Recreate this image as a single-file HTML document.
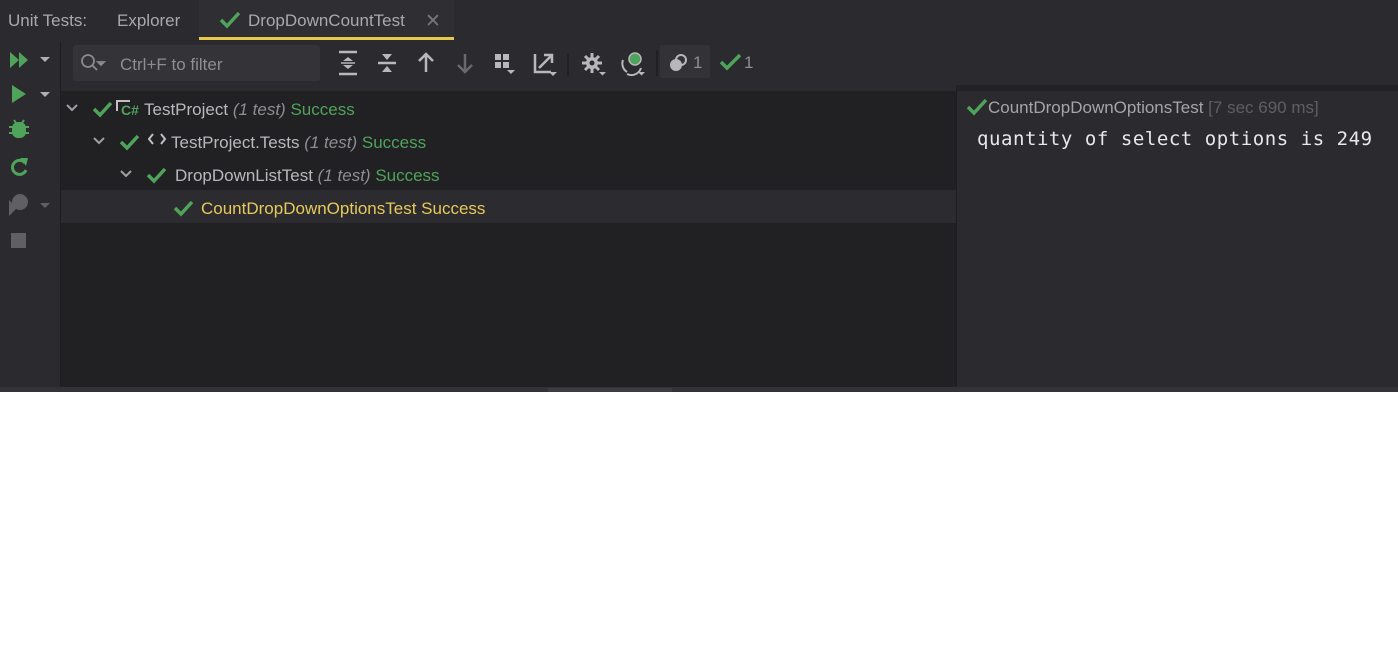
<!DOCTYPE html>
<html><head><style>
body{margin:0;width:1398px;height:648px;background:#fff;position:relative;overflow:hidden;font-family:"Liberation Sans",sans-serif}
.a{position:absolute}
.t{color:#b9b9bd;font-size:17px;white-space:nowrap}
.g{color:#4fa35a}
.i{font-style:italic;color:#8e8e93}
</style></head><body>
<div class="a" style="left:0;top:0;width:1398px;height:392px;background:#2b2a2e"></div>
<!-- tabs -->
<div class="a t" style="left:8px;top:11px;color:#a9a9ad">Unit Tests:</div>
<div class="a t" style="left:117px;top:11px;color:#a9a9ad">Explorer</div>
<div class="a" style="left:199px;top:0;width:255px;height:38px;background:#2f2e32"></div>
<div class="a" style="left:199px;top:37px;width:255px;height:3px;background:#e8c84a"></div>
<svg class="a" style="left:219px;top:11px" width="22" height="18"><path d="M2 9l6 6L20 2" stroke="#4fa35a" stroke-width="3.5" fill="none"/></svg>
<div class="a t" style="left:248px;top:11px;color:#a9a9ad">DropDownCountTest</div>
<div class="a t" style="left:425px;top:10px;color:#77777b;font-size:19px">✕</div>
<!-- left toolbar -->
<div class="a" style="left:60px;top:42px;width:1px;height:345px;background:#1e1d20"></div>
<svg class="a" style="left:8px;top:50px" width="48" height="210">
<path d="M2 2l9 8-9 8zM11 2l9 8-9 8z" fill="#4fa35a"/>
<path d="M32 7h10l-5 5z" fill="#b0b0b4"/>
<path d="M4 35l14 9-14 9z" fill="#4fa35a"/>
<path d="M32 42h10l-5 5z" fill="#b0b0b4"/>
<rect x="4" y="72" width="14" height="16" rx="6" fill="#4fa35a"/><path d="M1 77h20M1 83h20M6 70l2 3M16 70l-2 3" stroke="#4fa35a" stroke-width="2"/>
<path d="M17 113a7 7 0 1 0 1 7" stroke="#4fa35a" stroke-width="3" fill="none"/><path d="M12 108l8 0-2 8z" fill="#4fa35a"/>
<circle cx="12" cy="152" r="8" fill="#606064"/><path d="M1 150l8 8-8 8z" fill="#606064"/>
<path d="M32 153h10l-5 5z" fill="#606064"/>
<rect x="3" y="183" width="15" height="15" fill="#606064"/>
</svg>
<!-- filter -->
<div class="a" style="left:73px;top:45px;width:247px;height:36px;background:#343337;border-radius:3px"></div>
<svg class="a" style="left:80px;top:53px" width="28" height="20"><circle cx="8" cy="8" r="6" stroke="#8a8a8e" stroke-width="1.8" fill="none"/><path d="M12 12l5 5M18 9h6l-3 3z" stroke="#8a8a8e" stroke-width="1.8" fill="#8a8a8e"/></svg>
<div class="a t" style="left:120px;top:55px;color:#8e8e92">Ctrl+F to filter</div>
<svg class="a" style="left:335px;top:48px" width="430" height="32" fill="#b8b8bc" stroke="#b8b8bc">
<path d="M4 4h18M4 26h18" stroke-width="2.5"/><path d="M8 13l5-4 5 4zM8 17l5 4 5-4z" stroke="none"/><path d="M6 15h14" stroke-width="1.5"/>
<path d="M43 15h18" stroke-width="2.5"/><path d="M47 6l5 6 5-6zM47 24l5-6 5 6z" stroke="none"/>
<path d="M91 24V6M84 13l7-7 7 7" stroke-width="2.5" fill="none"/>
<path d="M130 6v18M123 17l7 7 7-7" stroke-width="2.5" fill="none" stroke="#6a6a6e"/>
<rect x="160" y="6" width="6" height="6" stroke="none"/><rect x="168" y="6" width="6" height="6" stroke="none"/><rect x="160" y="14" width="6" height="6" stroke="none"/><rect x="168" y="14" width="6" height="6" stroke="none"/><path d="M172 22h8l-4 4z" stroke="none"/>
<path d="M200 6v18h16M204 20l12-12M209 7h8v8" stroke-width="2.5" fill="none"/><path d="M214 24h8l-4 4z" stroke="none"/>
<path d="M233 6v22" stroke="#1e1d20" stroke-width="1.5"/>
<path d="M257 5v20M247 15h20M250 8l14 14M264 8l-14 14" stroke-width="3"/><circle cx="257" cy="15" r="6" stroke="none"/><circle cx="257" cy="15" r="2.5" fill="#2b2a2e" stroke="none"/><path d="M264 24h7l-3.5 3.5z" stroke="none"/>
<path d="M288 12a10 10 0 0 0 4 12M306 20a10 10 0 0 1-14 6" stroke-width="2" fill="none"/><circle cx="300" cy="11" r="6" fill="#4fa35a" stroke="#b8b8bc" stroke-width="1.5"/><path d="M303 24h7l-3.5 3.5z" stroke="none"/>
<path d="M322 2v26" stroke="#1e1d20" stroke-width="1.5"/>
</svg>
<div class="a" style="left:660px;top:45px;width:50px;height:33px;background:#333236;border-radius:2px"></div>
<svg class="a" style="left:668px;top:53px" width="22" height="20"><circle cx="13" cy="7" r="5" stroke="#b8b8bc" stroke-width="2" fill="none"/><circle cx="8" cy="12" r="6" fill="#b8b8bc"/></svg>
<div class="a t" style="left:693px;top:53px;color:#8e8e92">1</div>
<svg class="a" style="left:719px;top:53px" width="24" height="18"><path d="M2 9l6 6L21 2" stroke="#4fa35a" stroke-width="3.5" fill="none"/></svg>
<div class="a t" style="left:744px;top:53px;color:#8e8e92">1</div>
<!-- tree -->
<div class="a" style="left:61px;top:91px;width:895px;height:296px;background:#212023"></div>
<div class="a" style="left:61px;top:190px;width:895px;height:33px;background:#2c2b2f"></div>
<svg class="a" style="left:61px;top:91px" width="200" height="130" fill="none" stroke-width="2">
<path d="M6 14l5 5 5-5M33 47l5 5 5-5M60 80l5 5 5-5" stroke="#a0a0a4"/>
<g stroke="#4fa35a" stroke-width="3.5"><path d="M33 18l6 6 11-12M60 51l6 6 11-12M87 84l6 6 11-12M114 117l6 6 11-12"/></g>
<path d="M56 20V10h13" stroke="#c0c0c4"/>
<path d="M92 43l-4 5 4 5M100 43l4 5-4 5" stroke="#c0c0c4"/>
</svg>
<div class="a" style="left:121px;top:102px;color:#4fa35a;font-weight:bold;font-size:14px">C#</div>
<div class="a t" style="left:144px;top:100px">TestProject <span class="i">(1 test)</span> <span class="g">Success</span></div>
<div class="a t" style="left:171px;top:133px">TestProject.Tests <span class="i">(1 test)</span> <span class="g">Success</span></div>
<div class="a t" style="left:175px;top:166px">DropDownListTest <span class="i">(1 test)</span> <span class="g">Success</span></div>
<div class="a t" style="left:201px;top:199px;color:#e6c95a">CountDropDownOptionsTest Success</div>
<!-- right panel -->
<div class="a" style="left:956px;top:85px;width:442px;height:302px;box-sizing:border-box;background:#2b2a2e;border-left:1px solid #1e1d20;border-top:6px solid #232226"></div>
<svg class="a" style="left:966px;top:98px" width="22" height="18"><path d="M2 9l6 6L20 2" stroke="#4fa35a" stroke-width="3.5" fill="none"/></svg>
<div class="a t" style="left:988px;top:98px;color:#a5a5a9">CountDropDownOptionsTest <span style="color:#5f5f63">[7 sec 690 ms]</span></div>
<div class="a" style="left:977px;top:128px;color:#e8e8ea;font-family:'DejaVu Sans Mono','Liberation Mono',monospace;font-size:19px;letter-spacing:0.55px;white-space:nowrap">quantity of select options is 249</div>
<!-- bottom strip -->
<div class="a" style="left:0;top:387px;width:1398px;height:5px;background:#333236"></div>
<div class="a" style="left:548px;top:388px;width:124px;height:4px;background:#3d3c40"></div>
</body></html>
